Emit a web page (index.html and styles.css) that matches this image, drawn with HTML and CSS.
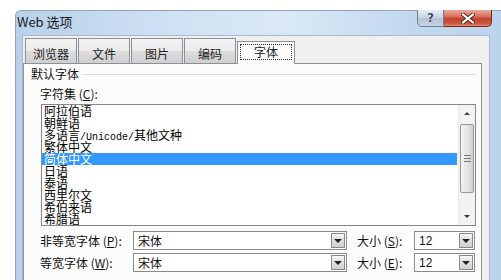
FILE: index.html
```html
<!DOCTYPE html>
<html lang="zh">
<head>
<meta charset="utf-8">
<title>Web 选项</title>
<link rel="stylesheet" href="styles.css">
</head>
<body>
<div class="window">
  <div class="titlebar">
    <div class="title">Web 选项</div>
    <div class="caption">
      <div class="btn-help"><span>?</span></div>
      <div class="btn-close">
        <svg width="14" height="11" viewBox="0 0 14 11"><path d="M2 1.5 L12 9.5 M12 1.5 L2 9.5" stroke="#4a2020" stroke-width="4" stroke-linecap="square"/><path d="M2 1.5 L12 9.5 M12 1.5 L2 9.5" stroke="#ffffff" stroke-width="2.2" stroke-linecap="square"/></svg>
      </div>
    </div>
  </div>
  <div class="client">
    <div class="tabs">
      <div class="tab">浏览器</div>
      <div class="tab">文件</div>
      <div class="tab">图片</div>
      <div class="tab">编码</div>
      <div class="tab tab-active"><span class="focus">字体</span></div>
    </div>
    <div class="panel">
      <div class="group-head">
        <span>默认字体</span>
        <span class="group-line"></span>
      </div>
      <div class="group">
        <div class="label">字符集 (<u>C</u>):</div>
        <div class="listbox">
          <ul class="items">
            <li>阿拉伯语</li>
            <li>朝鲜语</li>
            <li>多语言<span class="lat">/Unicode/</span>其他文种</li>
            <li>繁体中文</li>
            <li class="sel">简体中文</li>
            <li>日语</li>
            <li>泰语</li>
            <li>西里尔文</li>
            <li>希伯来语</li>
            <li>希腊语</li>
          </ul>
          <div class="vscroll">
            <div class="arrow"><span class="tri-up"></span></div>
            <div class="track">
              <div class="thumb"><span class="grip"></span></div>
            </div>
            <div class="arrow"><span class="tri-down"></span></div>
          </div>
        </div>
        <div class="font-row">
          <div class="flabel">非等宽字体 (<u>P</u>):</div>
          <div class="combo combo-font"><span class="val">宋体</span><span class="dd"><span class="tri-down"></span></span></div>
          <div class="slabel">大小 (<u>S</u>):</div>
          <div class="combo combo-size"><span class="val num">12</span><span class="dd"><span class="tri-down"></span></span></div>
        </div>
        <div class="font-row">
          <div class="flabel">等宽字体 (<u>W</u>):</div>
          <div class="combo combo-font"><span class="val">宋体</span><span class="dd"><span class="tri-down"></span></span></div>
          <div class="slabel">大小 (<u>E</u>):</div>
          <div class="combo combo-size"><span class="val num">12</span><span class="dd"><span class="tri-down"></span></span></div>
        </div>
      </div>
    </div>
  </div>
</div>
</body>
</html>
```
FILE: styles.css
```css
* { box-sizing: border-box; }
html, body {
  margin: 0;
  padding: 0;
  width: 501px;
  height: 280px;
  overflow: hidden;
  background: #ffffff;
  font-family: "Noto Sans CJK SC", "Noto Sans", sans-serif;
  font-size: 12px;
  color: #111;
}
.window {
  margin: 10px 0 0 15px;
  width: 486px;
  height: 270px;
  border: 1px solid #8fa4bf;
  border-right: none;
  border-bottom: none;
  border-radius: 6px 0 0 0;
  background: linear-gradient(90deg, #b8d0ea 0%, #cfe0f3 30%, #dbe9f7 55%, #c4d9ef 80%, #bcd3ec 100%);
  display: flex;
  flex-direction: column;
}
.titlebar {
  height: 24px;
  display: flex;
  align-items: flex-start;
  flex: none;
}
.title {
  margin: 3px 0 0 1px;
  font-size: 13px;
  line-height: 16px;
  color: #1a1a1a;
}
.caption {
  margin-left: auto;
  margin-right: 9px;
  margin-top: -1px;
  display: flex;
}
.btn-help {
  width: 27px;
  height: 17px;
  border: 1px solid #6d7f98;
  border-top: none;
  border-radius: 0 0 0 5px;
  background: linear-gradient(180deg, #e6edf5 0%, #ccd7e5 45%, #b3c2d6 55%, #c8d5e6 100%);
  display: flex;
  justify-content: center;
  align-items: center;
}
.btn-help span {
  font-family: "DejaVu Sans", sans-serif;
  font-weight: bold;
  font-size: 12px;
  line-height: 12px;
  color: #3b4a5e;
  text-shadow: 0 0 1px #fff, 0 0 1px #fff;
}
.btn-close {
  width: 48px;
  height: 17px;
  border: 1px solid #7a2a22;
  border-left: none;
  border-top: none;
  border-radius: 0 0 5px 0;
  background: linear-gradient(180deg, #e9a99a 0%, #d9725f 40%, #c2402b 55%, #c95a42 85%, #dd8a70 100%);
  display: flex;
  justify-content: center;
  align-items: center;
}
.client {
  margin-left: 6px;
  width: 468px;
  flex: 1;
  background: #f0f0f0;
  border-left: 1px solid #a9b8ca;
  border-top: 1px solid #a9b8ca;
  border-right: 1px solid #a9b8ca;
  display: flex;
  flex-direction: column;
}
.tabs {
  display: flex;
  align-items: flex-end;
  padding: 2px 0 0 2px;
  height: 27px;
  flex: none;
  position: relative;
  z-index: 1;
}
.tab {
  width: 52px;
  height: 25px;
  margin-right: 1px;
  border: 1px solid #8d9098;
  border-bottom: none;
  background: linear-gradient(180deg, #f3f3f3 0%, #ebebeb 50%, #dddddd 51%, #cfcfcf 100%);
  text-align: center;
  padding-top: 8px;
  line-height: 14px;
  font-size: 12px;
  color: #222;
}
.tab-active {
  width: 58px;
  background: #fcfcfc;
  padding-top: 2px;
  margin-bottom: -1px;
  height: 23px;
}
.focus {
  display: inline-block;
  width: 52px;
  height: 16px;
  border: 1px dotted #333;
  line-height: 14px;
}
.panel {
  margin-right: 7px;
  flex: 1;
  background: #fcfcfc;
  border: 1px solid #8d9098;
  border-bottom: none;
  padding: 3px 5px 0 7px;
}
.group-head {
  display: flex;
  align-items: center;
  height: 14px;
  line-height: 14px;
}
.group-line {
  flex: 1;
  margin-left: 3px;
  margin-top: 1px;
  border-top: 1px solid #d5dfe5;
}
.group {
  padding-left: 9px;
}
.label {
  margin-top: 6px;
  line-height: 14px;
  height: 14px;
}
.listbox {
  margin-top: 3px;
  margin-left: 1px;
  width: 435px;
  height: 122px;
  border: 1px solid #828790;
  background: #fff;
  display: flex;
}
.items {
  list-style: none;
  margin: 0;
  padding: 0;
  flex: 1;
}
.items li {
  height: 12px;
  line-height: 12px;
  font-size: 12px;
  padding-left: 2px;
  margin-right: 1px;
  white-space: nowrap;
  color: #000;
}
.items li.sel {
  background: #3399ff;
  color: #fff;
}
.lat {
  font-family: "Liberation Mono", monospace;
  font-size: 10px;
}
.vscroll {
  width: 17px;
  display: flex;
  flex-direction: column;
  background: #f2f2f2;
  border-left: 1px solid #e8e8e8;
}
.arrow {
  height: 17px;
  display: flex;
  justify-content: center;
  align-items: center;
}
.track {
  flex: 1;
  padding: 2px 1px;
}
.thumb {
  height: 69px;
  border: 1px solid #989898;
  border-radius: 2px;
  background: linear-gradient(90deg, #f2f2f2 0%, #e6e6e6 50%, #d2d2d2 100%);
  display: flex;
  justify-content: center;
  align-items: center;
}
.grip {
  width: 7px;
  height: 7px;
  border-top: 1px solid #777;
  border-bottom: 1px solid #777;
  position: relative;
}
.grip::after {
  content: "";
  position: absolute;
  left: 0;
  right: 0;
  top: 2px;
  border-top: 1px solid #777;
}
.tri-up {
  width: 0;
  height: 0;
  border-left: 3px solid transparent;
  border-right: 3px solid transparent;
  border-bottom: 3px solid #444;
}
.tri-down {
  width: 0;
  height: 0;
  border-left: 3px solid transparent;
  border-right: 3px solid transparent;
  border-top: 3px solid #333;
}
.font-row {
  display: flex;
  align-items: center;
  height: 19px;
  margin-top: 5px;
}
.font-row + .font-row {
  margin-top: 3px;
}
.flabel {
  width: 93px;
  line-height: 14px;
}
.combo {
  height: 19px;
  border: 1px solid #8a8a8a;
  background: #fff;
  display: flex;
  align-items: center;
  padding: 1px;
}
.combo-font {
  width: 214px;
}
.combo-size {
  width: 61px;
}
.val {
  flex: 1;
  padding-left: 3px;
  line-height: 14px;
}
.num {
  font-family: "Liberation Sans", sans-serif;
  font-size: 12px;
}
.dd {
  width: 14px;
  height: 15px;
  border: 1px solid #8a8a8a;
  background: linear-gradient(180deg, #f6f6f6 0%, #e0e0e0 50%, #cfcfcf 100%);
  display: flex;
  justify-content: center;
  align-items: center;
}
.dd .tri-down {
  border-left-width: 4px;
  border-right-width: 4px;
  border-top-width: 4px;
  border-top-color: #222;
}
.slabel {
  width: 67px;
  padding-left: 10px;
  line-height: 14px;
  white-space: nowrap;
}
```
